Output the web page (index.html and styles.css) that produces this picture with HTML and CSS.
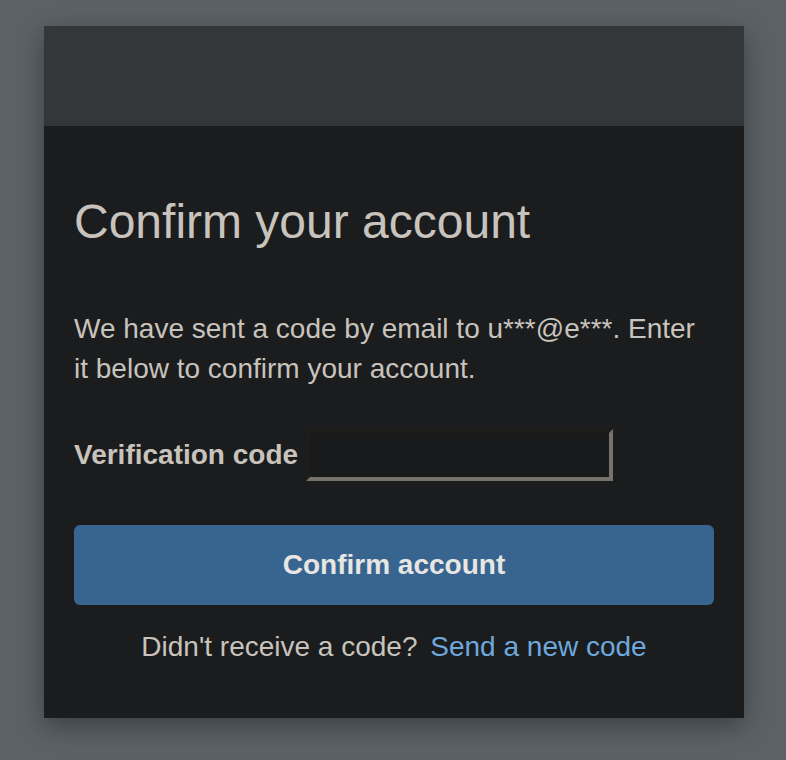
FILE: index.html
```html
<!DOCTYPE html>
<html lang="en">
<head>
<meta charset="utf-8">
<title>Confirm your account</title>
<link rel="stylesheet" href="styles.css">
</head>
<body>
<div class="card">
  <div class="card-header"></div>
  <div class="card-body">
    <h1 class="title">Confirm your account</h1>
    <p class="intro">We have sent a code by email to u***@e***. Enter it below to confirm your account.</p>
    <form class="form">
      <div class="field">
        <label class="label" for="code">Verification code</label>
        <input class="input" id="code" type="text">
      </div>
      <button class="button" type="button">Confirm account</button>
      <p class="resend">Didn't receive a code? <a class="link" href="#">Send a new code</a></p>
    </form>
  </div>
</div>
</body>
</html>
```
FILE: styles.css
```css
html, body {
  margin: 0;
  padding: 0;
}
body {
  background: #5b6166;
  font-family: "Liberation Sans", Arial, sans-serif;
  color: #c8c3bc;
  min-height: 760px;
  overflow: hidden;
}
.card {
  width: 700px;
  margin: 26px 0 0 44px;
  background: #1b1c1e;
  box-shadow: 0 8px 24px rgba(0, 0, 0, 0.35);
}
.card-header {
  height: 100px;
  background: #33373a;
}
.card-body {
  padding: 68px 30px 51px;
}
.title {
  margin: 0;
  font-size: 48px;
  font-weight: normal;
  line-height: 56px;
  color: #c8c3bc;
}
.intro {
  margin: 59px 0 0;
  font-size: 28px;
  line-height: 40px;
}
.form {
  margin: 0;
}
.field {
  display: flex;
  align-items: center;
  gap: 8px;
  margin-top: 40px;
}
.label {
  font-size: 28px;
  line-height: 40px;
  font-weight: bold;
}
.input {
  box-sizing: border-box;
  width: 307px;
  height: 52px;
  margin: 0;
  border-width: 4px;
  border-style: solid;
  border-color: #1f1d1a #77736b #77736b #1f1d1a;
  background: #181a1b;
  color: #c8c3bc;
  font: 28px "Liberation Sans", Arial, sans-serif;
  padding: 0 6px;
}
.button {
  display: block;
  width: 640px;
  height: 80px;
  margin-top: 44px;
  border: none;
  border-radius: 6px;
  background: #386590;
  color: #e8e6e3;
  font: bold 28px/40px "Liberation Sans", Arial, sans-serif;
  padding: 0;
}
.resend {
  margin: 22px 0 0;
  font-size: 28px;
  line-height: 40px;
  text-align: center;
}
.link {
  color: #6ea8dc;
  text-decoration: none;
  margin-left: 5px;
}
```
